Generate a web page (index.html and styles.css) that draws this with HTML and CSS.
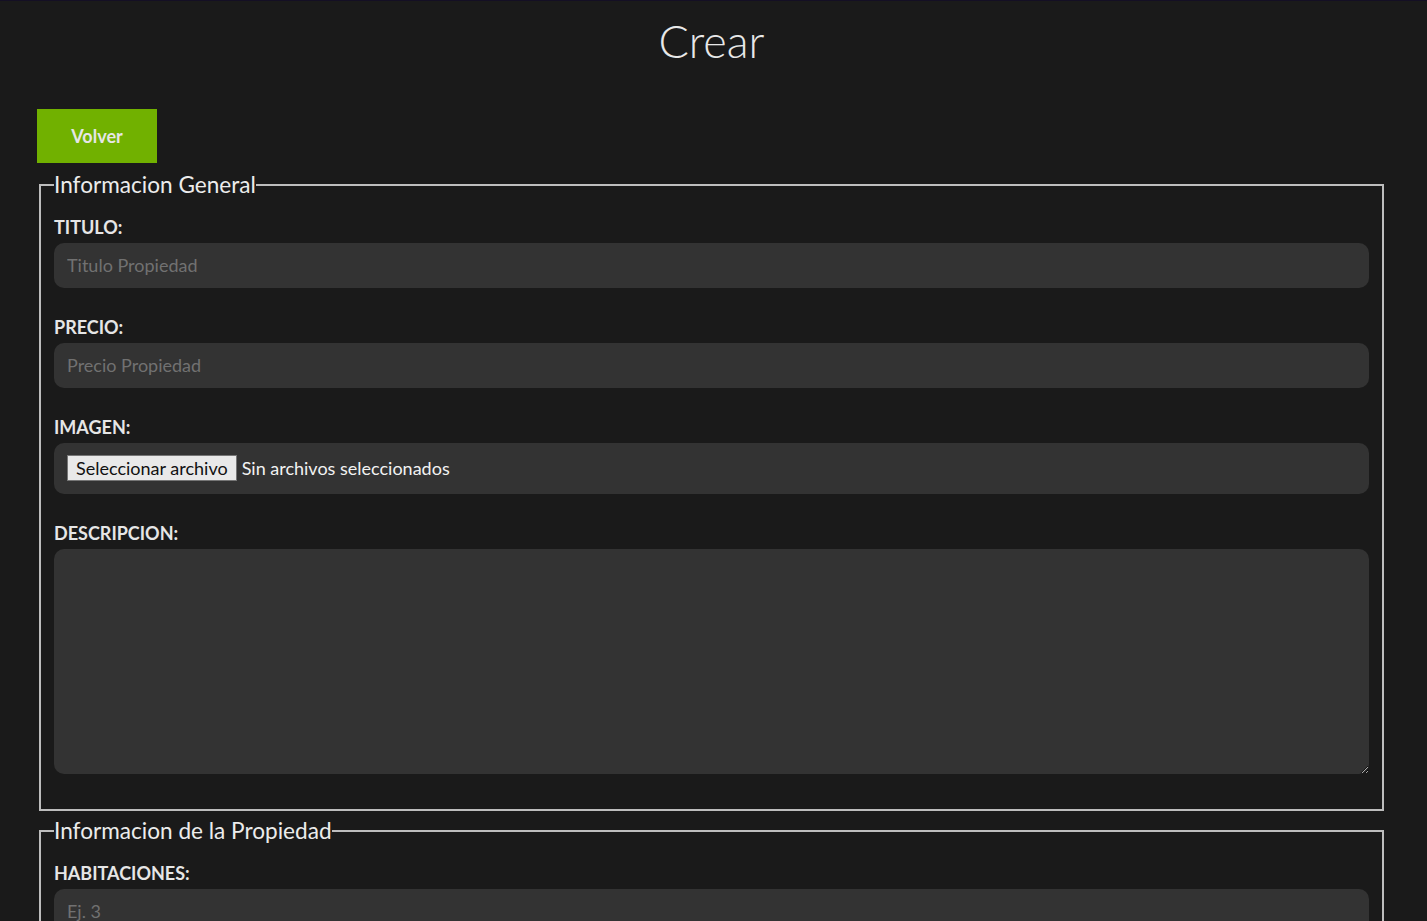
FILE: index.html
```html
<!DOCTYPE html>
<html lang="es">
<head>
<meta charset="UTF-8">
<title>Crear</title>
<link rel="stylesheet" href="styles.css">
</head>
<body>
<main class="contenedor">
  <h1 class="titulo">Crear</h1>
  <a href="#" class="boton boton-verde">Volver</a>
  <form class="formulario">
    <fieldset class="grupo">
      <legend class="leyenda">Informacion General</legend>
      <label class="etiqueta" for="titulo">TITULO:</label>
      <input class="campo" id="titulo" type="text" placeholder="Titulo Propiedad">
      <label class="etiqueta" for="precio">PRECIO:</label>
      <input class="campo" id="precio" type="text" placeholder="Precio Propiedad">
      <label class="etiqueta" for="imagen">IMAGEN:</label>
      <div class="campo campo-archivo" id="imagen">
        <span class="archivo-boton">Seleccionar archivo</span>
        <span class="archivo-texto">Sin archivos seleccionados</span>
      </div>
      <label class="etiqueta" for="descripcion">DESCRIPCION:</label>
      <textarea class="campo campo-area" id="descripcion"></textarea>
    </fieldset>
    <fieldset class="grupo">
      <legend class="leyenda">Informacion de la Propiedad</legend>
      <label class="etiqueta" for="habitaciones">HABITACIONES:</label>
      <input class="campo" id="habitaciones" type="text" placeholder="Ej. 3">
      <label class="etiqueta" for="wc">BAÑOS:</label>
      <input class="campo" id="wc" type="text" placeholder="Ej. 3">
    </fieldset>
  </form>
</main>
</body>
</html>
```

FILE: styles.css
```css
html {
  margin: 0;
  padding: 0;
}
body {
  margin: 0;
  padding: 0;
  background-color: #1a1a1a;
  border-top: 1px solid #140f24;
  color: #e6e6e6;
  font-family: Lato, "Open Sans", sans-serif;
  font-size: 18px;
}
.contenedor {
  margin: 0 41px 0 37px;
}
.titulo {
  margin: 0;
  height: 108px;
  box-sizing: border-box;
  text-align: center;
  font-weight: 300;
  font-size: 45px;
  line-height: 80px;
  color: #e8e8e8;
}
.boton {
  display: inline-block;
  box-sizing: border-box;
  width: 120px;
  height: 54px;
  line-height: 54px;
  text-align: center;
  color: #e6e6e6;
  font-weight: 700;
  font-size: 18px;
  text-decoration: none;
  vertical-align: top;
}
.boton-verde {
  background-color: #71b100;
}
.formulario {
  margin: 0;
}
.grupo {
  margin: 0 2px;
  padding: 5.5px 13px 11.25px 13px;
  border: 2px solid #bdbdbd;
}
.grupo + .grupo {
  margin-top: -2px;
}
.leyenda {
  padding: 0;
  font-size: 22.6px;
  line-height: 43.2px;
  color: #ececec;
}
.etiqueta {
  display: block;
  font-weight: 700;
  font-size: 18px;
  line-height: 31px;
  color: #e6e6e6;
}
.campo {
  display: block;
  width: 100%;
  box-sizing: border-box;
  height: 45px;
  margin: 0 0 24px;
  padding: 0 13px;
  border: none;
  border-radius: 10px;
  background-color: #333333;
  color: #e6e6e6;
  font-family: Lato, "Open Sans", sans-serif;
  font-size: 18px;
  outline: none;
}
.campo::placeholder {
  color: #717171;
}
.campo-archivo {
  display: flex;
  align-items: center;
  height: 51px;
  gap: 5px;
}
.archivo-boton {
  box-sizing: border-box;
  height: 26px;
  line-height: 24px;
  padding: 0 8px;
  background-color: #e9e9e9;
  border: 1px solid #767676;
  color: #111111;
  font-size: 18px;
}
.archivo-texto {
  color: #f2f2f2;
  font-size: 18px;
}
.campo-area {
  height: 225px;
  padding: 13px;
  resize: vertical;
}
```
